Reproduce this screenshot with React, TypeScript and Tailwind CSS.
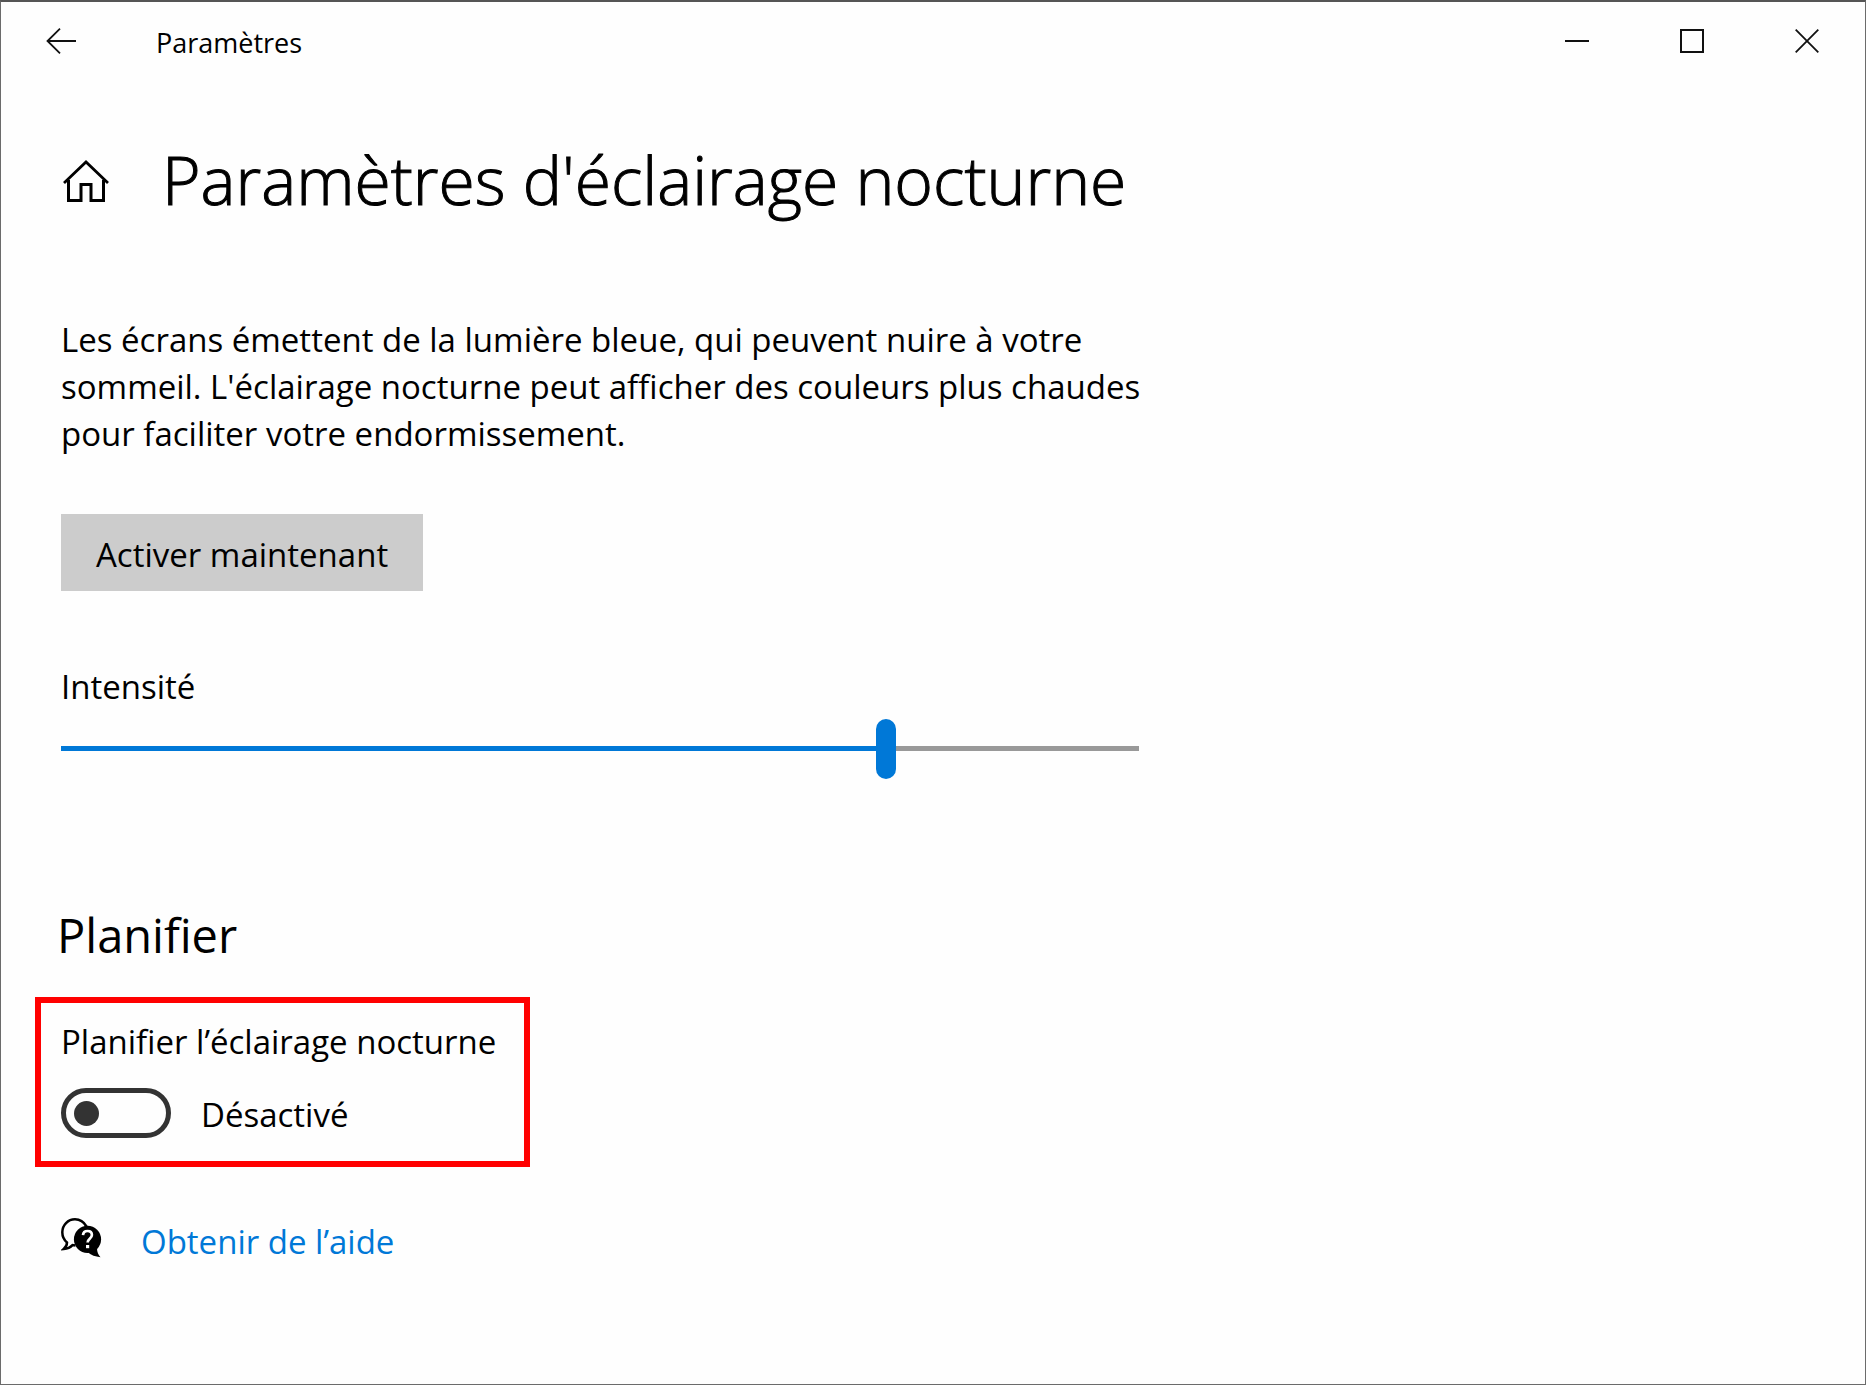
import { useState } from 'react';

function BackIcon() {
  return (
    <svg width="30" height="26" viewBox="0 0 30 26" fill="none" stroke="#111" strokeWidth="1.8" aria-hidden="true">
      <path d="M30 13H1.5M14 .7 1.5 13 14 25.3" />
    </svg>
  );
}

function HomeIcon() {
  return (
    <svg width="46" height="44" viewBox="0 0 46 44" fill="none" stroke="#000" strokeWidth="3" aria-hidden="true">
      <path d="M1 24 23 3l22 21" strokeWidth="2.8" />
      <path d="M5.500 21v20.500h12.500V25.500h10V41.500h12.500V21" />
    </svg>
  );
}

function HelpIcon() {
  return (
    <svg width="41" height="40" viewBox="0 0 41 40" aria-hidden="true">
      <path
        d="M25.500 8.500C22.900 4 18.700 1.300 14 1.300 7 1.300 1.300 7 1.300 14.300c0 4.200 1.800 7.800 4.700 10.200 0 2.500-1.300 4.800-3.300 6.500 3.600-.3 6.700-1.600 8.800-3.900l3 .3"
        fill="none"
        stroke="#000"
        strokeWidth="2.500"
      />
      <circle cx="26.500" cy="21.300" r="13.600" fill="#000" />
      <path d="M27 34.500c3.300 2.600 7.200 4.200 12.500 4.700-2.300-2.500-3.400-5.200-3.500-8.700z" fill="#000" />
      <path d="M22 17.200c.2-2.700 1.900-4.200 4.500-4.200s4.400 1.500 4.400 3.900c0 3.800-4.300 3.700-4.300 7.500" fill="none" stroke="#fff" strokeWidth="2.700" />
      <rect x="25" y="27" width="3.200" height="3.200" fill="#fff" />
    </svg>
  );
}

function TitleBar() {
  const control = 'flex h-full w-[115px] items-center justify-center';

  return (
    <header className="flex h-[78px] items-center pr-px">
      <button type="button" aria-label="Retour" className="flex h-full w-[120px] items-center justify-center">
        <BackIcon />
      </button>
      <span className="ml-[35px] flex-1 pt-0.5 text-[27px]">Paramètres</span>
      <button type="button" aria-label="Réduire" className={control}>
        <svg width="24" height="24" stroke="#111" strokeWidth="2" aria-hidden="true">
          <path d="M0 12h24" />
        </svg>
      </button>
      <button type="button" aria-label="Agrandir" className={control}>
        <svg width="24" height="24" fill="none" stroke="#111" strokeWidth="2" aria-hidden="true">
          <rect x="1" y="1" width="22" height="22" />
        </svg>
      </button>
      <button type="button" aria-label="Fermer" className={control}>
        <svg width="24" height="24" stroke="#111" strokeWidth="1.8" aria-hidden="true">
          <path d="m.7.7 22.600 22.600M23.300.7.7 23.300" />
        </svg>
      </button>
    </header>
  );
}

export default function App() {
  const [intensity, setIntensity] = useState(77);
  const [scheduled, setScheduled] = useState(false);

  return (
    <div className="flex min-h-screen flex-col border border-t-2 border-[#6b6b6b] border-t-[#555] bg-[#fefefe] font-['Open_Sans','Noto_Sans',sans-serif] text-[33px] leading-[47px] text-black">
      <TitleBar />

      <main className="px-[60px] pt-[55px]">
        <div className="flex items-center gap-[53px] pl-0.5">
          <HomeIcon />
          <h1 className="pb-[3px] text-[66px] leading-[89px] font-light [-webkit-text-stroke:1px_#000]">
            Paramètres d&apos;éclairage nocturne
          </h1>
        </div>

        <section className="mt-[89px] max-w-[1078px]">
          <p className="-mr-6">
            Les écrans émettent de la lumière bleue, qui peuvent nuire à votre sommeil. L&apos;éclairage nocturne
            peut afficher des couleurs plus chaudes pour faciliter votre endormissement.
          </p>
          <button type="button" className="mt-[57px] h-[77px] bg-[#ccc] px-[35px] pt-[3px]">
            Activer maintenant
          </button>

          <label htmlFor="intensity" className="mt-[72px] block">
            Intensité
          </label>
          <input
            id="intensity"
            type="range"
            min="0"
            max="100"
            value={intensity}
            onChange={(e) => setIntensity(Number(e.target.value))}
            className="mt-[9px] block h-[60px] w-full appearance-none bg-[length:100%_5px] bg-[position:0_27px] bg-no-repeat [&::-webkit-slider-thumb]:h-[60px] [&::-webkit-slider-thumb]:w-5 [&::-webkit-slider-thumb]:appearance-none [&::-webkit-slider-thumb]:rounded-full [&::-webkit-slider-thumb]:bg-[#0078d7]"
            style={{ backgroundImage: `linear-gradient(to right, #0078d7 ${intensity}%, #999 ${intensity}%)` }}
          />
        </section>

        <section className="mt-[120px]">
          <h2 className="-ml-1 text-[47px] leading-[72px]">Planifier</h2>
          <div className="mt-[26px] -ml-[26px] w-fit border-6 border-[#f00] pt-[15px] pr-7 pb-[23px] pl-5">
            <label htmlFor="schedule" className="block">
              Planifier l’éclairage nocturne
            </label>
            <div className="mt-[23px] flex items-center gap-[30px]">
              <input
                id="schedule"
                type="checkbox"
                role="switch"
                checked={scheduled}
                onChange={(e) => setScheduled(e.target.checked)}
                className="flex h-[50px] w-[110px] appearance-none items-center rounded-full border-5 border-[#333] px-2 before:size-[25px] before:rounded-full before:bg-[#333] checked:justify-end checked:border-[#0078d7] checked:bg-[#0078d7] checked:before:bg-white"
              />
              <span className="pt-[3px]">{scheduled ? 'Activé' : 'Désactivé'}</span>
            </div>
          </div>
        </section>

        <div className="mt-[51px] flex items-start gap-[39px]">
          <HelpIcon />
          <a href="#aide" className="text-[#0078d7]">
            Obtenir de l’aide
          </a>
        </div>
      </main>
    </div>
  );
}
